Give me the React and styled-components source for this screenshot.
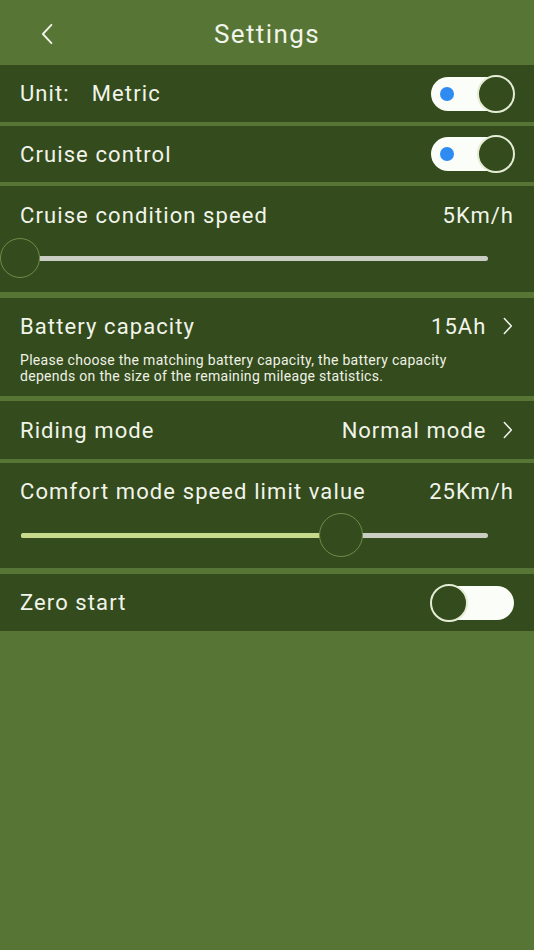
import React from 'react';
import styled, { createGlobalStyle } from 'styled-components';

const FONT = 'Roboto, "Noto Sans", "Liberation Sans", sans-serif';

const GlobalStyle = createGlobalStyle`
  html, body {
    margin: 0;
    padding: 0;
    background: #577534;
  }
  body {
    font-family: ${FONT};
    color: #f1f4ea;
  }
`;

const Page = styled.div`
  width: 534px;
  min-height: 950px;
  background: #577534;
`;

const Header = styled.div`
  height: 65px;
  display: flex;
  align-items: center;
  justify-content: center;
  position: relative;
`;

const BackButton = styled.div`
  position: absolute;
  left: 40px;
  top: 23px;
  display: flex;
`;

const Title = styled.h1`
  margin: 2px 0 0;
  font-size: 26px;
  font-weight: 400;
  letter-spacing: 1.4px;
  color: #f1f4ea;
`;

const Row = styled.div`
  background: #344b1d;
  margin-top: ${(p) => p.$gap ?? 4}px;
  padding: 0 20px 0 20px;
  min-height: ${(p) => p.$h || 57}px;
  display: flex;
  flex-direction: column;
  justify-content: ${(p) => (p.$tall ? 'flex-start' : 'center')};
  box-sizing: border-box;
`;

const Line = styled.div`
  display: flex;
  align-items: center;
  justify-content: space-between;
  height: ${(p) => p.$h || 'auto'};
`;

const Label = styled.span`
  font-size: 22px;
  letter-spacing: 1.1px;
  color: #f1f4ea;
  white-space: nowrap;
`;

const Value = styled(Label)`
  display: flex;
  align-items: center;
  gap: 16px;
  letter-spacing: 1px;
`;

const UnitValue = styled.span`
  margin-left: 22px;
`;

const Hint = styled.p`
  margin: -1px 0 0;
  font-size: 14px;
  line-height: 15.5px;
  letter-spacing: 0.3px;
  color: #eef2e6;
  white-space: nowrap;
`;

const Switch = styled.div`
  width: 83px;
  height: 34px;
  border-radius: 17px;
  background: #fbfdf8;
  position: relative;
  flex-shrink: 0;
`;

const Knob = styled.div`
  position: absolute;
  top: -2px;
  ${(p) => (p.$on ? 'right: -1px;' : 'left: -1px;')}
  width: 38px;
  height: 38px;
  border-radius: 50%;
  background: #344b1d;
  border: 2px solid #e4ecd4;
  box-sizing: border-box;
`;

const Dot = styled.div`
  position: absolute;
  left: 9px;
  top: 10px;
  width: 14px;
  height: 14px;
  border-radius: 50%;
  background: #2d8bf2;
`;

const SliderWrap = styled.div`
  position: relative;
  height: 44px;
  margin: ${(p) => p.$m || '0'};
  display: flex;
  align-items: center;
`;

const Track = styled.div`
  position: relative;
  width: 100%;
  height: 5px;
  border-radius: 3px;
  background: #c9cdc3;
`;

const Fill = styled.div`
  position: absolute;
  left: 0;
  top: 0;
  bottom: 0;
  border-radius: 3px;
  background: #c8d98c;
`;

const Thumb = styled.div`
  position: absolute;
  top: 50%;
  width: ${(p) => p.$size}px;
  height: ${(p) => p.$size}px;
  margin-left: ${(p) => -p.$size / 2}px;
  margin-top: ${(p) => -p.$size / 2}px;
  border-radius: 50%;
  border: 1.5px solid #6e8d48;
  background: #344b1d;
  box-sizing: border-box;
`;

const Chevron = ({ dir = 'right', h = 16 }) => (
  <svg width={h * 0.65} height={h} viewBox="0 0 10 18" fill="none">
    <path
      d={dir === 'right' ? 'M1.5 1.5 L8.5 9 L1.5 16.5' : 'M8.5 1.5 L1.5 9 L8.5 16.5'}
      stroke="#f1f4ea"
      strokeWidth="1.5"
      strokeLinecap="round"
      strokeLinejoin="round"
    />
  </svg>
);

const Toggle = ({ on }) => (
  <Switch>
    {on && <Dot />}
    <Knob $on={on} />
  </Switch>
);

const Slider = ({ value, size, fill, m }) => (
  <SliderWrap $m={m}>
    <Track>
      {fill && <Fill style={{ width: `${value}%` }} />}
      <Thumb $size={size} style={{ left: `${value}%` }} />
    </Track>
  </SliderWrap>
);

const App = () => {
  return (
    <Page>
      <GlobalStyle />
      <Header>
        <BackButton>
          <Chevron dir="left" h={22} />
        </BackButton>
        <Title>Settings</Title>
      </Header>

      <Row $gap={0} $h={57}>
        <Line>
          <Label>
            Unit:<UnitValue>Metric</UnitValue>
          </Label>
          <Toggle on />
        </Line>
      </Row>

      <Row $h={56}>
        <Line>
          <Label>Cruise control</Label>
          <Toggle on />
        </Line>
      </Row>

      <Row $h={106} $tall>
        <Line $h="58px">
          <Label>Cruise condition speed</Label>
          <Value>5Km/h</Value>
        </Line>
        <Slider value={0} size={40} m="-8px 26px 0 0" />
      </Row>

      <Row $h={98} $gap={6} $tall>
        <Line $h="56px">
          <Label>Battery capacity</Label>
          <Value>
            15Ah <Chevron h={18} />
          </Value>
        </Line>
        <Hint>
          Please choose the matching battery capacity, the battery capacity
          <br />
          depends on the size of the remaining mileage statistics.
        </Hint>
      </Row>

      <Row $h={58} $gap={5}>
        <Line>
          <Label>Riding mode</Label>
          <Value>
            Normal mode <Chevron h={18} />
          </Value>
        </Line>
      </Row>

      <Row $h={105} $tall>
        <Line $h="56px">
          <Label>Comfort mode speed limit value</Label>
          <Value>25Km/h</Value>
        </Line>
        <Slider value={68.5} size={44} fill m="-6px 26px 0 1px" />
      </Row>

      <Row $h={57} $gap={6}>
        <Line>
          <Label>Zero start</Label>
          <Toggle on={false} />
        </Line>
      </Row>
    </Page>
  );
};

export default App;
